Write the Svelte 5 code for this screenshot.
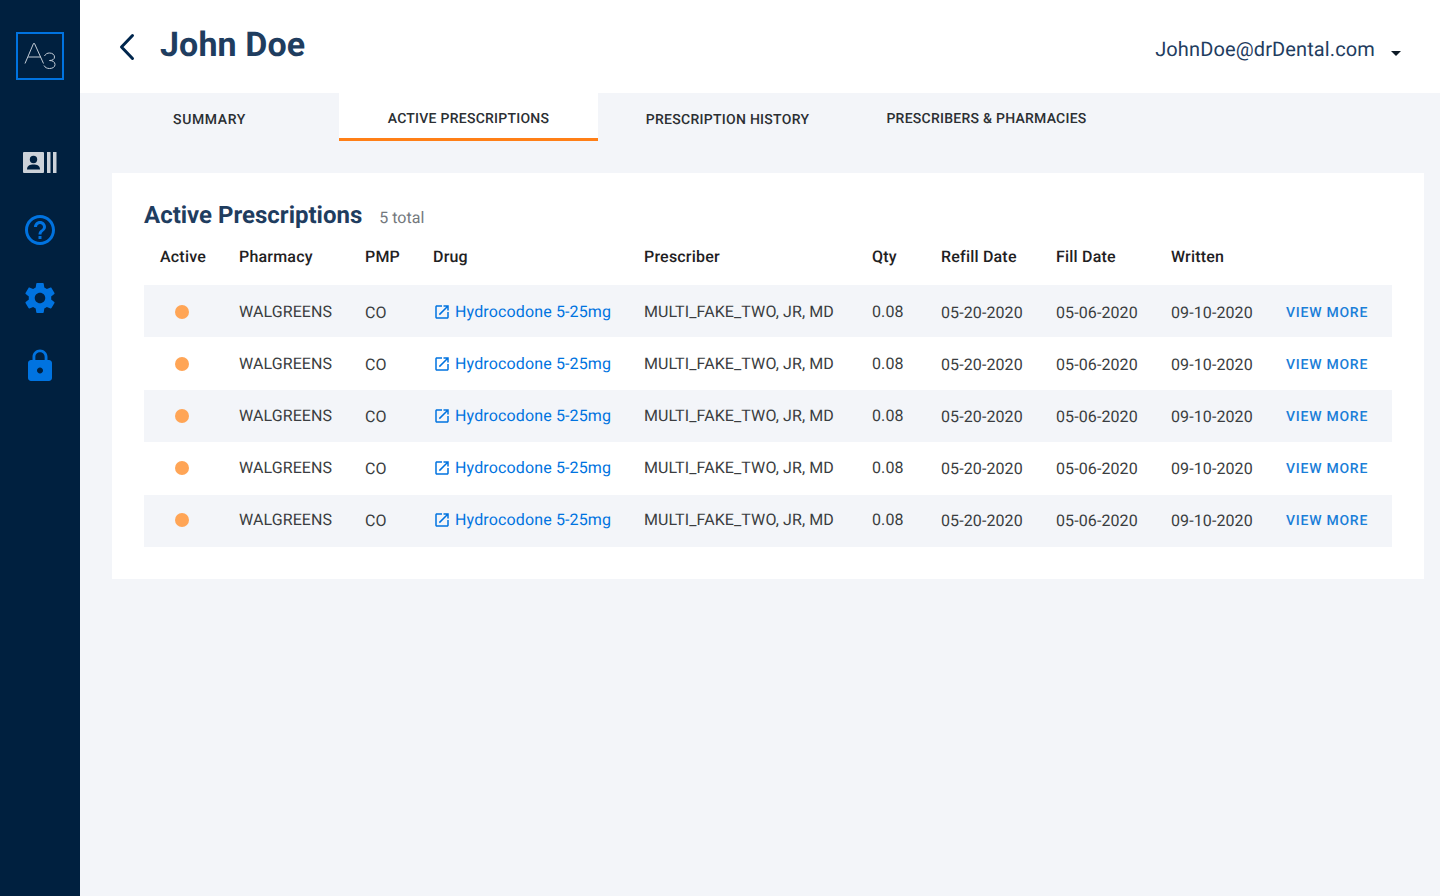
<script>
  const rows = [1, 2, 3, 4, 5];
  const tabs = [
    { label: 'SUMMARY', active: false },
    { label: 'ACTIVE PRESCRIPTIONS', active: true },
    { label: 'PRESCRIPTION HISTORY', active: false },
    { label: 'PRESCRIBERS & PHARMACIES', active: false }
  ];
  const heads = ['Active', 'Pharmacy', 'PMP', 'Drug', 'Prescriber', 'Qty', 'Refill Date', 'Fill Date', 'Written', ''];
</script>

<div class="app">
  <nav class="side">
    <div class="logo">
      <svg width="48" height="48" viewBox="0 0 48 48" fill="none">
        <rect x="1" y="1" width="46" height="46" stroke="#0073e0" stroke-width="2" />
        <path d="M9 31.500 L17.500 11.500 L18.500 11.500 L27.500 31.500 M12.200 25 H25" stroke="#c3ccd6" stroke-width="1" />
        <path d="M28.500 24 C29.500 21.800 31.500 21 33.500 21 C36.500 21 38.500 22.800 38.500 25 C38.500 27.300 36.500 28.500 33.500 28.500 C36.800 28.500 39 30 39 32.500 C39 35 36.800 36.500 33.500 36.500 C31 36.500 29 35.500 28 33.500" stroke="#c3ccd6" stroke-width="1" />
      </svg>
    </div>
    <div class="icons">
      <svg width="34" height="22" viewBox="0 0 34 22">
        <rect x="0" y="0" width="21" height="21" rx="1" fill="#ccd2d9" />
        <circle cx="10.500" cy="7.500" r="3.700" fill="#00203f" />
        <path d="M4 17.500 C4 13.500 7 12.500 10.500 12.500 C14 12.500 17 13.500 17 17.500 Z" fill="#00203f" />
        <rect x="24" y="0" width="3.500" height="21" fill="#ccd2d9" />
        <rect x="30" y="0" width="3.500" height="21" fill="#ccd2d9" />
      </svg>
      <svg width="36" height="36" viewBox="0 0 24 24">
        <path fill="#0073e0" d="M11 18h2v-2h-2v2zm1-16C6.480 2 2 6.480 2 12s4.480 10 10 10 10-4.480 10-10S17.520 2 12 2zm0 18c-4.410 0-8-3.590-8-8s3.590-8 8-8 8 3.590 8 8-3.590 8-8 8zm0-14c-2.210 0-4 1.790-4 4h2c0-1.100.9-2 2-2s2 .9 2 2c0 2-3 1.750-3 5h2c0-2.250 3-2.500 3-5 0-2.210-1.790-4-4-4z" />
      </svg>
      <svg width="36" height="36" viewBox="0 0 24 24">
        <path fill="#0073e0" d="M19.430 12.980c.04-.32.07-.64.07-.98s-.03-.66-.07-.98l2.110-1.650c.19-.15.24-.42.120-.64l-2-3.460c-.12-.22-.39-.3-.61-.22l-2.490 1c-.52-.4-1.080-.73-1.690-.98l-.38-2.650C14.460 2.180 14.250 2 14 2h-4c-.25 0-.46.18-.49.42l-.38 2.650c-.61.25-1.170.59-1.690.98l-2.490-1c-.23-.09-.49 0-.61.22l-2 3.460c-.13.22-.07.49.12.64l2.110 1.650c-.04.32-.07.65-.07.98s.03.66.07.98l-2.110 1.650c-.19.15-.24.42-.12.64l2 3.460c.12.22.39.3.61.22l2.490-1c.52.4 1.080.73 1.690.98l.38 2.650c.03.24.24.42.49.42h4c.25 0 .46-.18.49-.42l.38-2.650c.61-.25 1.170-.59 1.690-.98l2.490 1c.23.09.49 0 .61-.22l2-3.460c.12-.22.07-.49-.12-.64l-2.110-1.650zM12 15.500c-1.930 0-3.500-1.570-3.500-3.500s1.570-3.500 3.500-3.500 3.500 1.570 3.500 3.500-1.570 3.500-3.500 3.500z" />
      </svg>
      <svg width="36" height="36" viewBox="0 0 24 24">
        <path fill="#0073e0" d="M18 8h-1V6c0-2.760-2.240-5-5-5S7 3.240 7 6v2H6c-1.100 0-2 .9-2 2v10c0 1.100.9 2 2 2h12c1.100 0 2-.9 2-2V10c0-1.100-.9-2-2-2zm-6 9c-1.100 0-2-.9-2-2s.9-2 2-2 2 .9 2 2-.9 2-2 2zm3.100-9H8.900V6c0-1.710 1.390-3.100 3.100-3.100 1.710 0 3.100 1.390 3.100 3.100v2z" />
      </svg>
    </div>
  </nav>

  <div class="main">
    <header class="top">
      <div class="who">
        <svg width="20" height="30" viewBox="0 0 20 30" fill="none">
          <path d="M15.500 3.500 L4.500 15 L15.500 26.500" stroke="#00264d" stroke-width="3" stroke-linecap="round" stroke-linejoin="round" />
        </svg>
        <h1>John Doe</h1>
      </div>
      <div class="account">
        <span>JohnDoe@drDental.com</span>
        <i class="caret"></i>
      </div>
    </header>

    <div class="tabs">
      {#each tabs as t}
        <div class="tab" class:active={t.active}>{t.label}</div>
      {/each}
    </div>

    <section class="card">
      <div class="title">
        <h2>Active Prescriptions</h2>
        <span>5 total</span>
      </div>
      <div class="grid head">
        {#each heads as h}<div>{h}</div>{/each}
      </div>
      {#each rows as r}
        <div class="grid row">
          <div class="dotcell"><i class="dot"></i></div>
          <div>WALGREENS</div>
          <div class="low">CO</div>
          <div class="drug">
            <svg width="18" height="18" viewBox="0 0 24 24">
              <path fill="#0073e0" d="M19 19H5V5h7V3H5c-1.110 0-2 .9-2 2v14c0 1.100.89 2 2 2h14c1.100 0 2-.9 2-2v-7h-2v7zM14 3v2h3.590l-9.830 9.830 1.410 1.410L19 6.410V10h2V3h-7z" />
            </svg>
            <span>Hydrocodone 5-25mg</span>
          </div>
          <div>MULTI_FAKE_TWO, JR, MD</div>
          <div>0.08</div>
          <div class="low">05-20-2020</div>
          <div class="low">05-06-2020</div>
          <div class="low">09-10-2020</div>
          <div class="more">VIEW MORE</div>
        </div>
      {/each}
    </section>
  </div>
</div>

<style>
  :global(body) {
    margin: 0;
    background: #f3f5f9;
    font-family: Roboto, "Liberation Sans", sans-serif;
    text-rendering: geometricPrecision;
  }
  .app {
    display: flex;
    min-height: 896px;
  }
  .side {
    width: 80px;
    flex: none;
    background: #00203f;
    display: flex;
    flex-direction: column;
    align-items: center;
  }
  .logo {
    margin-top: 32px;
    height: 48px;
  }
  .logo svg, .icons svg {
    display: block;
  }
  .icons {
    margin-top: 60px;
    display: flex;
    flex-direction: column;
    align-items: center;
    gap: 32px;
  }
  .icons svg:first-child {
    margin: 12px 0 6px;
  }
  .main {
    flex: 1;
    min-width: 0;
    background: #f3f5f9;
  }
  .top {
    height: 93px;
    background: #fff;
    display: flex;
    justify-content: space-between;
    align-items: center;
    padding: 0 39px 0 37px;
  }
  .who {
    display: flex;
    align-items: center;
    gap: 23px;
    margin-top: -4px;
  }
  .who svg {
    display: block;
    margin-top: 5px;
  }
  h1 {
    margin: 0;
    font-size: 34px;
    line-height: 40px;
    font-weight: 700;
    letter-spacing: 0.1px;
    color: #1f3d5f;
  }
  .account {
    display: flex;
    align-items: center;
    gap: 16px;
    color: #1f3d5f;
    font-size: 20px;
    letter-spacing: 0.12px;
    margin-top: 5px;
  }
  .caret {
    width: 0;
    height: 0;
    border: 5px solid transparent;
    border-top-color: #0d1a26;
    border-bottom: 0;
    margin-top: 9px;
  }
  .tabs {
    display: flex;
    height: 48px;
  }
  .tab {
    width: 259px;
    box-sizing: border-box;
    height: 48px;
    display: flex;
    justify-content: center;
    align-items: center;
    padding-top: 6px;
    font-size: 14px;
    font-weight: 500;
    letter-spacing: 0.6px;
    color: #2b2f33;
  }
  .tab.active {
    background: #fff;
    border-bottom: 3px solid #ff7f17;
    padding-top: 7px;
    letter-spacing: 0.25px;
  }
  .tab:nth-child(3) {
    letter-spacing: 0.28px;
  }
  .tab:last-child {
    padding-top: 4px;
    letter-spacing: 0.25px;
  }
  .card {
    margin: 32px 16px 0 32px;
    background: #fff;
    padding: 25px 32px 32px;
  }
  .title {
    display: flex;
    align-items: baseline;
    gap: 17px;
  }
  h2 {
    margin: 0;
    font-size: 24px;
    line-height: 34px;
    font-weight: 700;
    color: #1f3d5f;
  }
  .title span {
    color: #73787d;
    font-size: 16px;
  }
  .grid {
    display: grid;
    grid-template-columns: 95px 126px 68px 211px 228px 69px 115px 115px 115px 106px;
    align-items: center;
  }
  .grid > div:first-child {
    padding-left: 16px;
  }
  .head {
    height: 53px;
    font-size: 16px;
    font-weight: 500;
    letter-spacing: 0.2px;
    color: #1f2123;
    padding-bottom: 4px;
    box-sizing: border-box;
  }
  .row {
    box-sizing: border-box;
    height: 52px;
    font-size: 16px;
    letter-spacing: 0.1px;
    color: #3a3d40;
  }
  .row:nth-child(odd) {
    background: #f3f5f9;
  }
  .row:nth-child(4) {
    height: 53px;
    padding-bottom: 1px;
  }
  .row:nth-child(5) {
    padding-bottom: 2px;
  }
  .row:nth-child(6) {
    height: 53px;
    padding-bottom: 3px;
  }
  .row:nth-child(7) {
    padding-bottom: 4px;
  }
  .low {
    padding-top: 2px;
  }
  .dotcell {
    display: flex;
    padding-left: 31px !important;
    padding-top: 2px;
  }
  .dot {
    width: 14px;
    height: 14px;
    border-radius: 50%;
    background: #ffa556;
  }
  .drug {
    display: flex;
    align-items: center;
    gap: 4px;
    color: #0073e0;
    letter-spacing: 0.14px;
  }
  .drug svg {
    display: block;
    flex: none;
    margin-top: 1px;
  }
  .more {
    color: #1a7ed8;
    font-size: 14px;
    font-weight: 500;
    letter-spacing: 0.75px;
    padding-top: 4px;
  }
</style>
